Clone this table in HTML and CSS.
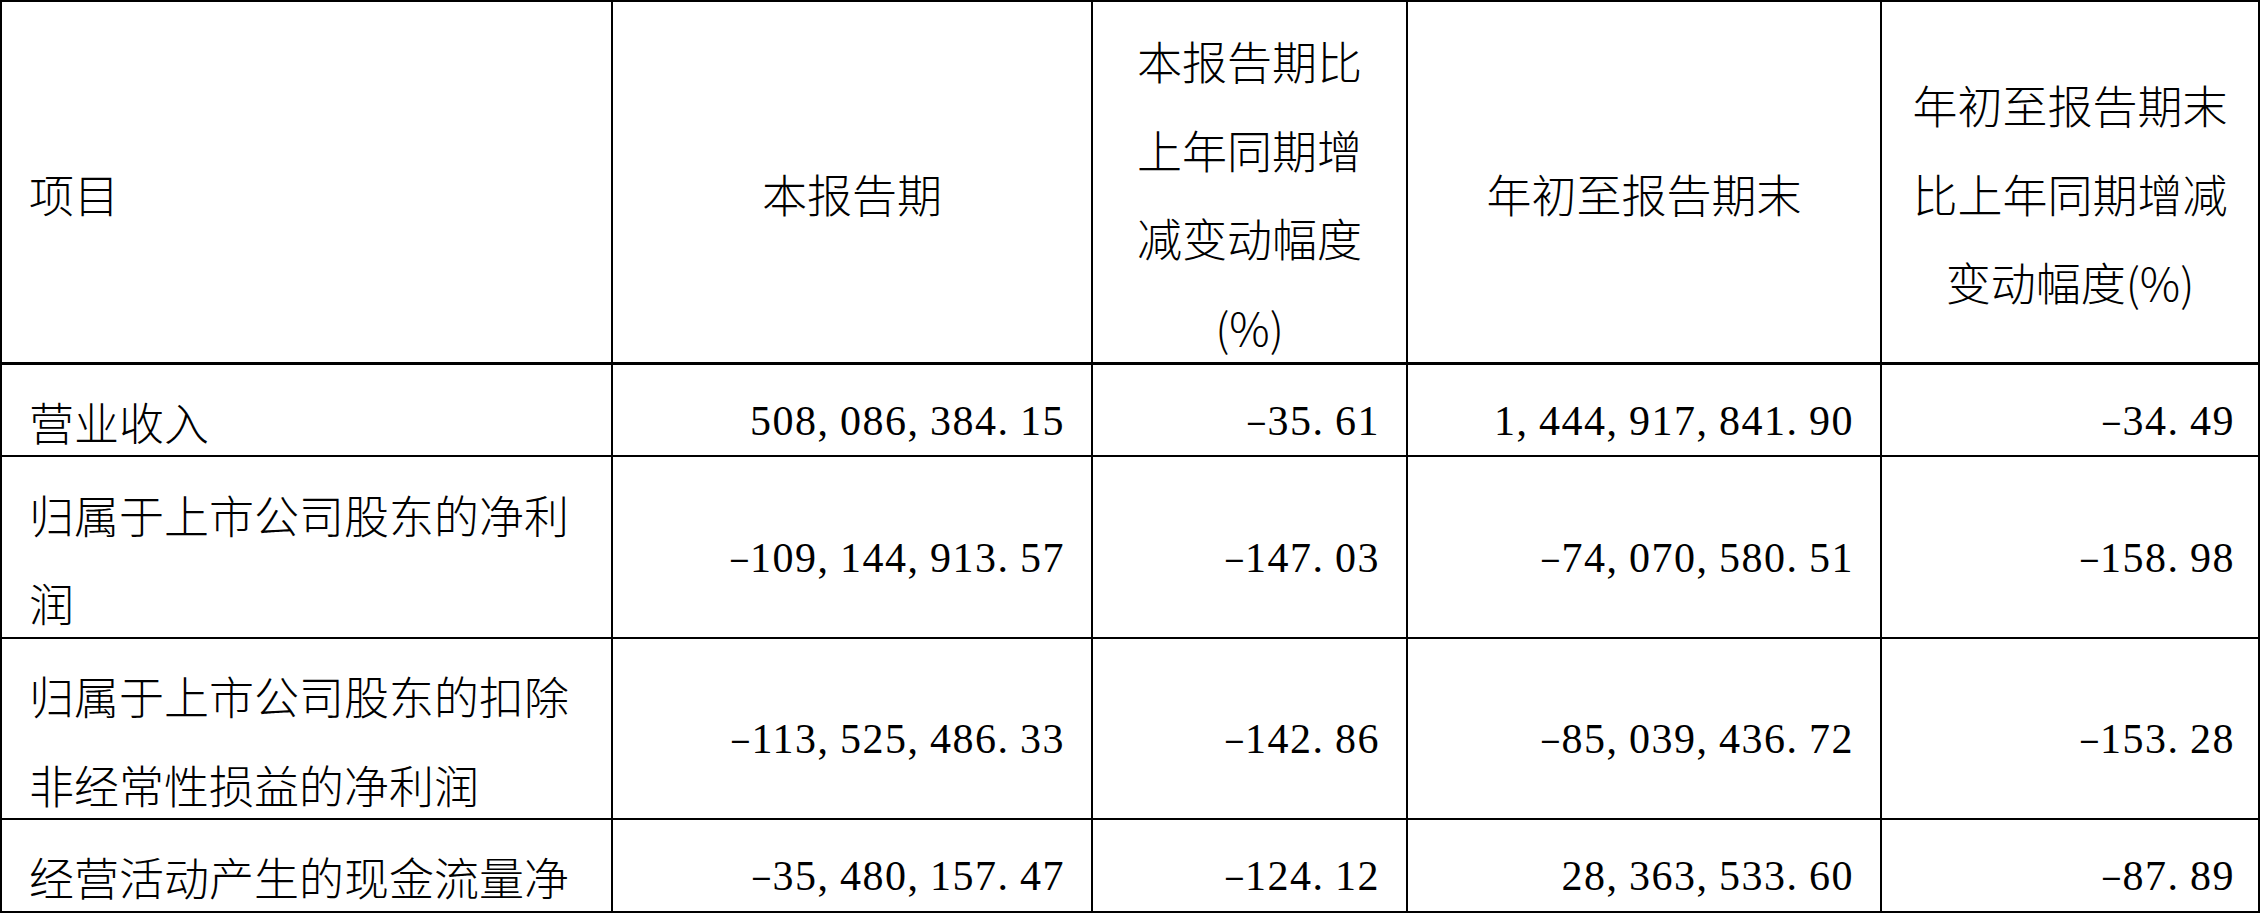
FILE: index.html
```html
<!DOCTYPE html>
<html lang="zh-CN">
<head>
<meta charset="utf-8">
<title>主要财务数据</title>
<link rel="stylesheet" href="styles.css">
</head>
<body>
<div class="sheet">
  <div class="cell hd"><div class="tx">项目</div></div>
  <div class="cell hd ctr"><div class="tx">本报告期</div></div>
  <div class="cell hd ctr"><div class="tx">本报告期比<br>上年同期增<br>减变动幅度<br>(%)</div></div>
  <div class="cell hd ctr"><div class="tx">年初至报告期末</div></div>
  <div class="cell hd ctr"><div class="tx">年初至报告期末<br>比上年同期增减<br>变动幅度(%)</div></div>

  <div class="cell"><div class="tx">营业收入</div></div>
  <div class="cell num"><div class="tx">508<span class="pu">,</span>086<span class="pu">,</span>384<span class="pu">.</span>15</div></div>
  <div class="cell num"><div class="tx"><span class="mi">-</span>35<span class="pu">.</span>61</div></div>
  <div class="cell num"><div class="tx">1<span class="pu">,</span>444<span class="pu">,</span>917<span class="pu">,</span>841<span class="pu">.</span>90</div></div>
  <div class="cell num last"><div class="tx"><span class="mi">-</span>34<span class="pu">.</span>49</div></div>

  <div class="cell"><div class="tx">归属于上市公司股东的净利润</div></div>
  <div class="cell num"><div class="tx"><span class="mi">-</span>109<span class="pu">,</span>144<span class="pu">,</span>913<span class="pu">.</span>57</div></div>
  <div class="cell num"><div class="tx"><span class="mi">-</span>147<span class="pu">.</span>03</div></div>
  <div class="cell num"><div class="tx"><span class="mi">-</span>74<span class="pu">,</span>070<span class="pu">,</span>580<span class="pu">.</span>51</div></div>
  <div class="cell num last"><div class="tx"><span class="mi">-</span>158<span class="pu">.</span>98</div></div>

  <div class="cell"><div class="tx">归属于上市公司股东的扣除非经常性损益的净利润</div></div>
  <div class="cell num"><div class="tx"><span class="mi">-</span>113<span class="pu">,</span>525<span class="pu">,</span>486<span class="pu">.</span>33</div></div>
  <div class="cell num"><div class="tx"><span class="mi">-</span>142<span class="pu">.</span>86</div></div>
  <div class="cell num"><div class="tx"><span class="mi">-</span>85<span class="pu">,</span>039<span class="pu">,</span>436<span class="pu">.</span>72</div></div>
  <div class="cell num last"><div class="tx"><span class="mi">-</span>153<span class="pu">.</span>28</div></div>

  <div class="cell"><div class="tx">经营活动产生的现金流量净</div></div>
  <div class="cell num"><div class="tx"><span class="mi">-</span>35<span class="pu">,</span>480<span class="pu">,</span>157<span class="pu">.</span>47</div></div>
  <div class="cell num"><div class="tx"><span class="mi">-</span>124<span class="pu">.</span>12</div></div>
  <div class="cell num"><div class="tx">28<span class="pu">,</span>363<span class="pu">,</span>533<span class="pu">.</span>60</div></div>
  <div class="cell num last"><div class="tx"><span class="mi">-</span>87<span class="pu">.</span>89</div></div>
</div>
</body>
</html>
```

FILE: styles.css
```css
html, body {
  margin: 0;
  padding: 0;
  background: #ffffff;
}

body {
  color: #000000;
  font-family: "Noto Sans CJK SC", "Noto Sans", sans-serif;
  font-size: 45px;
  font-weight: 300;
}

.sheet {
  display: grid;
  grid-template-columns: 611px 480px 315px 474px 378px;
  grid-template-rows: 363px 92px 182px 181px 93px;
  width: max-content;
  border-top: 2px solid #000;
  border-left: 2px solid #000;
  line-height: 88.5px;
}

.cell {
  box-sizing: border-box;
  display: flex;
  align-items: center;
  justify-content: flex-start;
  padding: 24px 27px 0 27px;
  border-right: 2px solid #000;
  border-bottom: 2px solid #000;
  min-width: 0;
}

.hd {
  border-bottom-width: 3px;
}

.ctr {
  justify-content: center;
  text-align: center;
  padding-left: 20px;
  padding-right: 20px;
}

.tx {
  white-space: normal;
}

.num {
  justify-content: flex-end;
  text-align: right;
  font-family: "Liberation Serif", "Times New Roman", serif;
  font-size: 42px;
  font-weight: 400;
  letter-spacing: 1.5px;
  padding-top: 22px;
  padding-right: 26px;
  white-space: nowrap;
}

.num .tx {
  white-space: nowrap;
}

.num.last {
  padding-right: 23px;
}

.pu {
  display: inline-block;
  width: 22.5px;
  text-align: left;
  letter-spacing: 0;
}

.mi {
  display: inline-block;
  width: 22.5px;
  text-align: center;
  letter-spacing: 0;
  transform: scaleX(1.55) scaleY(0.7);
}
```
